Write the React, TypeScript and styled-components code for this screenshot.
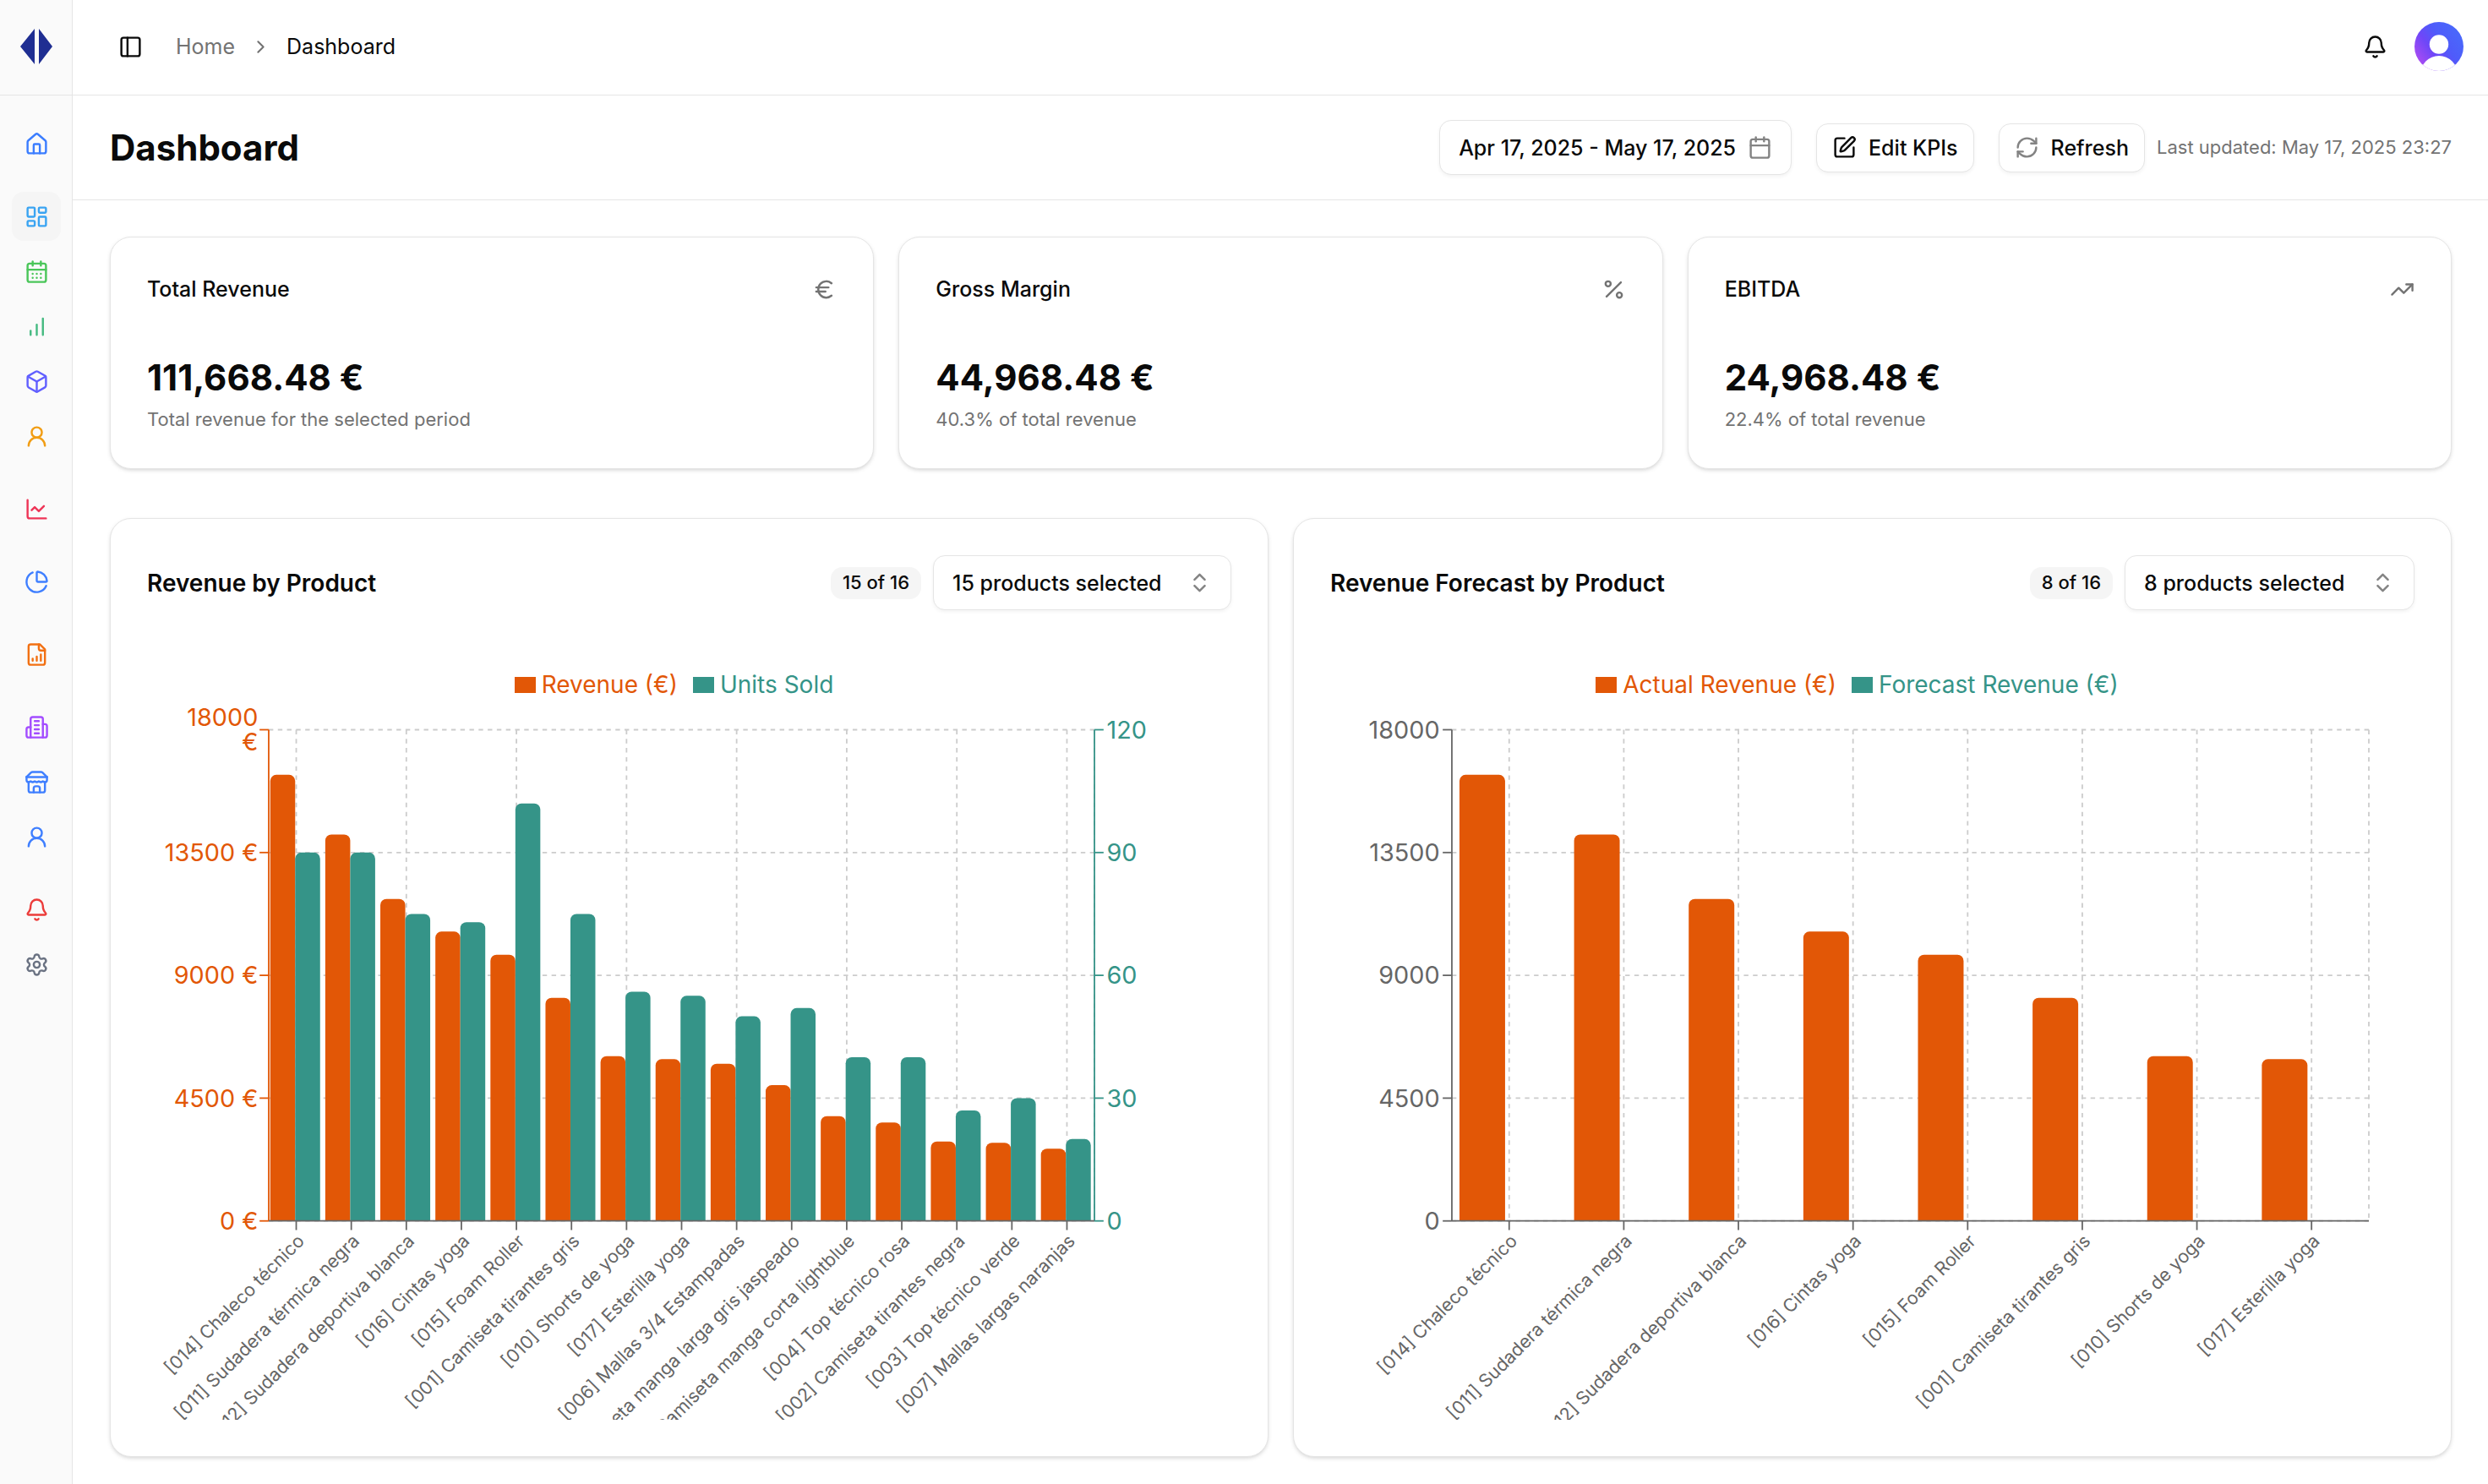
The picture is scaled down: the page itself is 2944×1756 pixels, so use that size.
import React from "react";
import styled, { createGlobalStyle } from "styled-components";
import {
  Bell,
  Box,
  Calendar,
  CalendarDays,
  ChartLine,
  ChartPie,
  ChevronRight,
  ChevronsUpDown,
  Euro,
  House,
  LayoutDashboard,
  PanelLeft,
  Percent,
  RefreshCw,
  Settings,
  SquarePen,
  TrendingUp,
  UserRound,
} from "lucide-react";

const ORANGE = "#e25706";
const TEAL = "#359488";
const INK = "#0a0a0a";
const MUTED = "#737373";
const LINE = "#e5e5e5";

const GlobalStyle = createGlobalStyle`
  *, *::before, *::after { box-sizing: border-box; }
  body {
    margin: 0;
    background: #ffffff;
    color: ${INK};
    font-family: Inter, "Liberation Sans", sans-serif;
    font-size: 25px;
    line-height: 36px;
    -webkit-font-smoothing: antialiased;
  }
  h1, h2, h3, p, ol, ul, dl, dd { margin: 0; padding: 0; }
  button, select { font: inherit; color: inherit; }
`;

/* ---------- shell ---------- */

const Shell = styled.div`
  display: grid;
  grid-template-columns: 86px minmax(0, 1fr);
  min-height: 100vh;
`;

const Sidebar = styled.aside`
  display: flex;
  flex-direction: column;
  background: #fafafa;
  border-right: 1px solid ${LINE};
`;

const LogoLink = styled.a`
  display: flex;
  align-items: center;
  justify-content: center;
  height: 113px;
  padding-bottom: 2px;
  border-bottom: 1px solid ${LINE};
`;

const Nav = styled.nav`
  display: flex;
  flex-direction: column;
  gap: 28px;
  padding: 28px 13px 29px 14px;
`;

const NavGroup = styled.ul`
  display: flex;
  flex-direction: column;
  gap: 7px;
  list-style: none;
`;

const NavLink = styled.a<{ $color: string; $active?: boolean }>`
  display: flex;
  align-items: center;
  justify-content: center;
  height: 58px;
  border-radius: 14px;
  color: ${(p) => p.$color};
  background: ${(p) => (p.$active ? "#f5f5f5" : "transparent")};
`;

const Page = styled.div`
  display: flex;
  flex-direction: column;
  min-width: 0;
`;

const TopBar = styled.header`
  display: flex;
  align-items: center;
  justify-content: space-between;
  height: 113px;
  padding: 0 29px 2px 43px;
  border-bottom: 1px solid ${LINE};
`;

const TopGroup = styled.div<{ $gap: number }>`
  display: flex;
  align-items: center;
  gap: ${(p) => p.$gap}px;
`;

const IconButton = styled.button<{ $size: number }>`
  display: flex;
  align-items: center;
  justify-content: center;
  width: ${(p) => p.$size}px;
  height: ${(p) => p.$size}px;
  padding: 0;
  border: 0;
  border-radius: 14px;
  background: transparent;
`;

const Crumbs = styled.ol`
  display: flex;
  align-items: center;
  gap: 18px;
  list-style: none;
  color: ${MUTED};

  li { display: flex; }
  a { color: inherit; text-decoration: none; }
  [aria-current] { color: ${INK}; }
`;

/* ---------- title bar ---------- */

const TitleBar = styled.div`
  display: flex;
  align-items: center;
  justify-content: space-between;
  height: 124px;
  padding: 0 43px 0 44px;
  border-bottom: 1px solid ${LINE};
`;

const PageTitle = styled.h1`
  font-size: 42px;
  line-height: 58px;
  font-weight: 700;
`;

const Actions = styled.div`
  display: flex;
  align-items: center;
  gap: 29px;
`;

const RefreshGroup = styled.div`
  display: flex;
  align-items: center;
  gap: 14px;
`;

const OutlineButton = styled.button<{ $large?: boolean }>`
  display: flex;
  align-items: center;
  gap: 14px;
  height: ${(p) => (p.$large ? 65 : 58)}px;
  padding: 0 ${(p) => (p.$large ? 22 : 18)}px;
  border: 1px solid ${LINE};
  border-radius: 14px;
  background: #ffffff;
  box-shadow: 0 2px 4px rgba(0, 0, 0, 0.05);
  font-weight: 500;
  white-space: nowrap;
`;

const FadedIcon = styled.span`
  display: flex;
  opacity: 0.5;
`;

const Small = styled.p`
  font-size: 22px;
  line-height: 29px;
  color: ${MUTED};
`;

/* ---------- cards ---------- */

const Main = styled.main`
  display: flex;
  flex-direction: column;
  gap: 58px;
  padding: 43px 43px 32px 44px;
`;

const CardGrid = styled.div<{ $columns: number }>`
  display: grid;
  grid-template-columns: repeat(${(p) => p.$columns}, minmax(0, 1fr));
  gap: 29px;
`;

const Card = styled.section`
  padding: 43px;
  border: 1px solid ${LINE};
  border-radius: 25px;
  background: #ffffff;
  box-shadow: 0 2px 5px rgba(0, 0, 0, 0.1), 0 2px 4px -2px rgba(0, 0, 0, 0.1);
`;

const KpiHead = styled.div`
  display: flex;
  align-items: center;
  justify-content: space-between;
  margin-bottom: 58px;
  color: ${MUTED};
`;

const KpiTitle = styled.h2`
  font-size: 25px;
  line-height: 36px;
  font-weight: 500;
  color: ${INK};
`;

const KpiValue = styled.p`
  margin-bottom: 6px;
  font-size: 42px;
  line-height: 58px;
  font-weight: 700;
`;

const ChartHead = styled.div`
  display: flex;
  align-items: center;
  justify-content: space-between;
  margin-bottom: 58px;
`;

const ChartTitle = styled.h2`
  font-size: 28px;
  line-height: 36px;
  font-weight: 600;
`;

const Controls = styled.div`
  display: flex;
  align-items: center;
  gap: 14px;
`;

const Badge = styled.span`
  padding: 4px 14px 5px;
  border-radius: 14px;
  background: #f5f5f5;
  font-size: 22px;
  line-height: 29px;
  font-weight: 500;
`;

const Picker = styled.div`
  display: grid;
  align-items: center;

  > * { grid-area: 1 / 1; }
  > svg {
    justify-self: end;
    margin-right: 23px;
    opacity: 0.5;
    pointer-events: none;
  }
`;

const PickerSelect = styled.select`
  appearance: none;
  height: 65px;
  padding: 0 81px 0 22px;
  border: 1px solid ${LINE};
  border-radius: 14px;
  background: #ffffff;
  box-shadow: 0 2px 4px rgba(0, 0, 0, 0.05);
  font-weight: 500;
`;

/* ---------- charts ---------- */

const Legend = styled.ul`
  display: flex;
  justify-content: center;
  gap: 18px;
  height: 52px;
  padding: 9px 36px 0 0;
  list-style: none;
  font-size: 28px;
  line-height: 43px;
`;

const LegendItem = styled.li<{ $color: string }>`
  display: flex;
  align-items: center;
  gap: 7px;
  color: ${(p) => p.$color};

  &::before {
    content: "";
    width: 25px;
    height: 19px;
    background: ${(p) => p.$color};
  }
`;

const Plot = styled.svg`
  display: block;
  width: 100%;
  height: auto;
  overflow: hidden;
  font-size: 16px;
`;

const AxisLabel = styled.text`
  font-size: 12px;
  fill: #666666;
`;

type Product = { name: string; revenue: number; units: number };

const products: Product[] = [
  { name: "[014] Chaleco técnico", revenue: 16350, units: 90 },
  { name: "[011] Sudadera térmica negra", revenue: 14160, units: 90 },
  { name: "[012] Sudadera deportiva blanca", revenue: 11798, units: 75 },
  { name: "[016] Cintas yoga", revenue: 10605, units: 73 },
  { name: "[015] Foam Roller", revenue: 9754, units: 102 },
  { name: "[001] Camiseta tirantes gris", revenue: 8175, units: 75 },
  { name: "[010] Shorts de yoga", revenue: 6038, units: 56 },
  { name: "[017] Esterilla yoga", revenue: 5927, units: 55 },
  { name: "[006] Mallas 3/4 Estampadas", revenue: 5760, units: 50 },
  { name: "[008] Camiseta manga larga gris jaspeado", revenue: 4976, units: 52 },
  { name: "[009] Camiseta manga corta lightblue", revenue: 3840, units: 40 },
  { name: "[004] Top técnico rosa", revenue: 3610, units: 40 },
  { name: "[002] Camiseta tirantes negra", revenue: 2911, units: 27 },
  { name: "[003] Top técnico verde", revenue: 2864, units: 30 },
  { name: "[007] Mallas largas naranjas", revenue: 2650, units: 20 },
];

const VIEW_W = 713;
const VIEW_H = 471;
const TOP = 17.5;
const BOTTOM = 340.5;
const LEFT = 80;
const STEPS = [0, 1, 2, 3, 4];
const stepY = (i: number) => BOTTOM - ((BOTTOM - TOP) * i) / 4;

function Bar(props: { x: number; width: number; share: number; color: string }) {
  const { x, width, share, color } = props;
  const y = BOTTOM - (BOTTOM - TOP) * share;
  return (
    <path
      fill={color}
      d={`M${x} ${BOTTOM}V${y + 4}a4 4 0 0 1 4 -4h${width - 8}a4 4 0 0 1 4 4V${BOTTOM}z`}
    />
  );
}

type ChartProps = {
  title: string;
  data: Product[];
  right: number;
  barOffset: number;
  barWidth: number;
  gridEvery: number;
  axisColor: string;
  unit?: string;
  withUnits?: boolean;
};

function BarChart(props: ChartProps) {
  const { title, data, right, barOffset, barWidth, gridEvery, axisColor, unit, withUnits } = props;
  const band = (right - LEFT) / data.length;
  const center = (i: number) => LEFT + band * (i + 0.5);
  const labelX = unit ? LEFT - 7 : LEFT - 8;
  return (
    <Plot viewBox={`0 0 ${VIEW_W} ${VIEW_H}`} role="img" aria-label={title}>
      <g stroke="#cccccc" strokeDasharray="3 3">
        {STEPS.map((s) => (
          <line key={s} x1={LEFT} x2={right} y1={stepY(s)} y2={stepY(s)} />
        ))}
        {data.map((d, i) =>
          i % gridEvery === 0 ? (
            <line key={d.name} x1={center(i)} x2={center(i)} y1={TOP} y2={BOTTOM} />
          ) : null
        )}
        <line x1={right} x2={right} y1={TOP} y2={BOTTOM} />
      </g>

      {data.map((d, i) => (
        <AxisLabel
          key={d.name}
          x={center(i)}
          y={BOTTOM + 8}
          dy="0.71em"
          textAnchor="end"
          transform={`rotate(-45 ${center(i)} ${BOTTOM + 8})`}
        >
          {d.name}
        </AxisLabel>
      ))}

      <g stroke={axisColor}>
        <line x1={LEFT} x2={LEFT} y1={TOP} y2={BOTTOM} />
        {STEPS.map((s) => (
          <line key={s} x1={LEFT - 6} x2={LEFT} y1={stepY(s)} y2={stepY(s)} />
        ))}
      </g>
      <g fill={axisColor} textAnchor="end">
        {STEPS.map((s) =>
          unit && s === 4 ? (
            <text key={s} y={stepY(s) - 8} dy="0.355em">
              <tspan x={labelX}>18000</tspan>
              <tspan x={labelX} dy="1em">
                {unit}
              </tspan>
            </text>
          ) : (
            <text key={s} x={labelX} y={stepY(s)} dy="0.355em">
              {unit ? `${s * 4500} ${unit}` : s * 4500}
            </text>
          )
        )}
      </g>

      {withUnits && (
        <>
          <g stroke={TEAL}>
            <line x1={right} x2={right} y1={TOP} y2={BOTTOM} />
            {STEPS.map((s) => (
              <line key={s} x1={right} x2={right + 6} y1={stepY(s)} y2={stepY(s)} />
            ))}
          </g>
          <g fill={TEAL}>
            {STEPS.map((s) => (
              <text key={s} x={right + 8} y={stepY(s)} dy="0.355em">
                {s * 30}
              </text>
            ))}
          </g>
        </>
      )}

      {data.map((d, i) => (
        <g key={d.name}>
          <Bar
            x={LEFT + band * i + barOffset}
            width={barWidth}
            share={d.revenue / 18000}
            color={ORANGE}
          />
          {withUnits && (
            <Bar
              x={LEFT + band * i + barOffset + barWidth}
              width={barWidth}
              share={d.units / 120}
              color={TEAL}
            />
          )}
        </g>
      ))}

      <g stroke="#666666">
        <line x1={LEFT} x2={right} y1={BOTTOM} y2={BOTTOM} />
        {data.map((d, i) => (
          <line key={d.name} x1={center(i)} x2={center(i)} y1={BOTTOM} y2={BOTTOM + 6} />
        ))}
      </g>
    </Plot>
  );
}

/* ---------- drawings ---------- */

const ICON = 29;

function Glyph({ children }: { children: React.ReactNode }) {
  return (
    <svg
      width={ICON}
      height={ICON}
      viewBox="0 0 24 24"
      fill="none"
      stroke="currentColor"
      strokeWidth="2"
      strokeLinecap="round"
      strokeLinejoin="round"
      aria-hidden="true"
    >
      {children}
    </svg>
  );
}

const ColumnsIcon = () => (
  <Glyph>
    <path d="M12 20V10M18 20V4M6 20v-4" />
  </Glyph>
);

const ReportIcon = () => (
  <Glyph>
    <path d="M15 2H6a2 2 0 0 0-2 2v16a2 2 0 0 0 2 2h12a2 2 0 0 0 2-2V7Z" />
    <path d="M14 2v4a2 2 0 0 0 2 2h4" />
    <path d="M8 18v-2M12 18v-4M16 18v-6" />
  </Glyph>
);

const BuildingIcon = () => (
  <Glyph>
    <path d="M6 22V4a2 2 0 0 1 2-2h8a2 2 0 0 1 2 2v18Z" />
    <path d="M6 12H4a2 2 0 0 0-2 2v6a2 2 0 0 0 2 2h2" />
    <path d="M18 9h2a2 2 0 0 1 2 2v9a2 2 0 0 1-2 2h-2" />
    <path d="M10 6h4M10 10h4M10 14h4M10 18h4" />
  </Glyph>
);

const StoreIcon = () => (
  <Glyph>
    <path d="m2 7 4.41-4.41A2 2 0 0 1 7.83 2h8.34a2 2 0 0 1 1.42.59L22 7" />
    <path d="M4 12v8a2 2 0 0 0 2 2h12a2 2 0 0 0 2-2v-8" />
    <path d="M15 22v-4a2 2 0 0 0-2-2h-2a2 2 0 0 0-2 2v4" />
    <path d="M2 7h20" />
    <path d="M22 7v3a2 2 0 0 1-2 2a2.7 2.7 0 0 1-1.59-.63.7.7 0 0 0-.82 0A2.7 2.7 0 0 1 16 12a2.7 2.7 0 0 1-1.59-.63.7.7 0 0 0-.82 0A2.7 2.7 0 0 1 12 12a2.7 2.7 0 0 1-1.59-.63.7.7 0 0 0-.82 0A2.7 2.7 0 0 1 8 12a2.7 2.7 0 0 1-1.59-.63.7.7 0 0 0-.82 0A2.7 2.7 0 0 1 4 12a2 2 0 0 1-2-2V7" />
  </Glyph>
);

const Logo = () => (
  <svg width="38" height="42" viewBox="0 0 38 42" aria-hidden="true">
    <path d="M17 0V42L0 21Z M22 0V42L38 21Z" fill="#1f2e92" />
  </svg>
);

const Avatar = () => (
  <svg width="58" height="58" viewBox="0 0 58 58" aria-hidden="true">
    <defs>
      <linearGradient id="avatar-fill" x1="6" y1="46" x2="50" y2="14" gradientUnits="userSpaceOnUse">
        <stop offset="0" stopColor="#a44bf3" />
        <stop offset="0.35" stopColor="#6e47f8" />
        <stop offset="0.65" stopColor="#4f5bfa" />
        <stop offset="1" stopColor="#4a66fb" />
      </linearGradient>
      <clipPath id="avatar-clip">
        <circle cx="29" cy="29" r="29" />
      </clipPath>
    </defs>
    <g clipPath="url(#avatar-clip)">
      <rect width="58" height="58" fill="url(#avatar-fill)" />
      <circle cx="29" cy="26.5" r="11.2" fill="#ffffff" />
      <circle cx="29" cy="62" r="22" fill="#ffffff" />
    </g>
  </svg>
);

/* ---------- page data ---------- */

type NavEntry = { label: string; color: string; icon: React.ReactNode; active?: boolean };

const navGroups: NavEntry[][] = [
  [{ label: "Home", color: "#3b7dff", icon: <House size={ICON} /> }],
  [
    { label: "Dashboard", color: "#3aa4f2", icon: <LayoutDashboard size={ICON} />, active: true },
    { label: "Calendar", color: "#4bc65a", icon: <CalendarDays size={ICON} /> },
    { label: "Sales", color: "#45ba81", icon: <ColumnsIcon /> },
    { label: "Products", color: "#615fff", icon: <Box size={ICON} /> },
    { label: "Customers", color: "#f19d14", icon: <UserRound size={ICON} /> },
  ],
  [{ label: "Forecast", color: "#ee3557", icon: <ChartLine size={ICON} /> }],
  [{ label: "Analysis", color: "#3f7fff", icon: <ChartPie size={ICON} /> }],
  [{ label: "Reports", color: "#f27012", icon: <ReportIcon /> }],
  [
    { label: "Company", color: "#a34dff", icon: <BuildingIcon /> },
    { label: "Stores", color: "#3f7fff", icon: <StoreIcon /> },
    { label: "Users", color: "#3f7fff", icon: <UserRound size={ICON} /> },
  ],
  [
    { label: "Alerts", color: "#ec3c3a", icon: <Bell size={ICON} /> },
    { label: "Settings", color: "#6a7282", icon: <Settings size={ICON} /> },
  ],
];

const kpis = [
  {
    title: "Total Revenue",
    value: "111,668.48 €",
    note: "Total revenue for the selected period",
    icon: <Euro size={ICON} />,
  },
  {
    title: "Gross Margin",
    value: "44,968.48 €",
    note: "40.3% of total revenue",
    icon: <Percent size={ICON} />,
  },
  {
    title: "EBITDA",
    value: "24,968.48 €",
    note: "22.4% of total revenue",
    icon: <TrendingUp size={ICON} />,
  },
];

type ChartCardProps = {
  title: string;
  badge: string;
  selected: string;
  series: [string, string];
  children: React.ReactNode;
};

function ChartCard({ title, badge, selected, series, children }: ChartCardProps) {
  return (
    <Card>
      <ChartHead>
        <ChartTitle>{title}</ChartTitle>
        <Controls>
          <Badge>{badge}</Badge>
          <Picker>
            <PickerSelect aria-label={`Products shown in ${title}`}>
              <option>{selected}</option>
            </PickerSelect>
            <ChevronsUpDown size={ICON} />
          </Picker>
        </Controls>
      </ChartHead>
      <Legend>
        <LegendItem $color={ORANGE}>{series[0]}</LegendItem>
        <LegendItem $color={TEAL}>{series[1]}</LegendItem>
      </Legend>
      {children}
    </Card>
  );
}

export default function App() {
  return (
    <>
      <GlobalStyle />
      <Shell>
        <Sidebar>
          <LogoLink href="#" aria-label="Company home">
            <Logo />
          </LogoLink>
          <Nav aria-label="Main">
            {navGroups.map((group) => (
              <NavGroup key={group[0].label}>
                {group.map((item) => (
                  <li key={item.label}>
                    <NavLink
                      href="#"
                      aria-label={item.label}
                      $color={item.color}
                      $active={item.active}
                    >
                      {item.icon}
                    </NavLink>
                  </li>
                ))}
              </NavGroup>
            ))}
          </Nav>
        </Sidebar>

        <Page>
          <TopBar>
            <TopGroup $gap={29}>
              <IconButton $size={50} aria-label="Toggle sidebar">
                <PanelLeft size={ICON} />
              </IconButton>
              <nav aria-label="Breadcrumb">
                <Crumbs>
                  <li>
                    <a href="#">Home</a>
                  </li>
                  <li aria-hidden="true">
                    <ChevronRight size={25} />
                  </li>
                  <li aria-current="page">Dashboard</li>
                </Crumbs>
              </nav>
            </TopGroup>
            <TopGroup $gap={14}>
              <IconButton $size={65} aria-label="Notifications">
                <Bell size={ICON} />
              </IconButton>
              <IconButton $size={58} aria-label="Account">
                <Avatar />
              </IconButton>
            </TopGroup>
          </TopBar>

          <TitleBar>
            <PageTitle>Dashboard</PageTitle>
            <Actions>
              <OutlineButton $large>
                Apr 17, 2025 - May 17, 2025
                <FadedIcon>
                  <Calendar size={ICON} />
                </FadedIcon>
              </OutlineButton>
              <OutlineButton>
                <SquarePen size={ICON} />
                Edit KPIs
              </OutlineButton>
              <RefreshGroup>
                <OutlineButton>
                  <FadedIcon>
                    <RefreshCw size={ICON} />
                  </FadedIcon>
                  Refresh
                </OutlineButton>
                <Small>Last updated: May 17, 2025 23:27</Small>
              </RefreshGroup>
            </Actions>
          </TitleBar>

          <Main>
            <CardGrid $columns={3}>
              {kpis.map((kpi) => (
                <Card key={kpi.title}>
                  <KpiHead>
                    <KpiTitle>{kpi.title}</KpiTitle>
                    {kpi.icon}
                  </KpiHead>
                  <KpiValue>{kpi.value}</KpiValue>
                  <Small>{kpi.note}</Small>
                </Card>
              ))}
            </CardGrid>

            <CardGrid $columns={2}>
              <ChartCard
                title="Revenue by Product"
                badge="15 of 16"
                selected="15 products selected"
                series={["Revenue (€)", "Units Sold"]}
              >
                <BarChart
                  title="Revenue and units sold by product"
                  data={products}
                  right={623}
                  barOffset={1}
                  barWidth={16.4}
                  gridEvery={2}
                  axisColor={ORANGE}
                  unit="€"
                  withUnits
                />
              </ChartCard>
              <ChartCard
                title="Revenue Forecast by Product"
                badge="8 of 16"
                selected="8 products selected"
                series={["Actual Revenue (€)", "Forecast Revenue (€)"]}
              >
                <BarChart
                  title="Actual revenue by product"
                  data={products.slice(0, 8)}
                  right={683}
                  barOffset={5}
                  barWidth={30}
                  gridEvery={1}
                  axisColor="#666666"
                />
              </ChartCard>
            </CardGrid>
          </Main>
        </Page>
      </Shell>
    </>
  );
}
